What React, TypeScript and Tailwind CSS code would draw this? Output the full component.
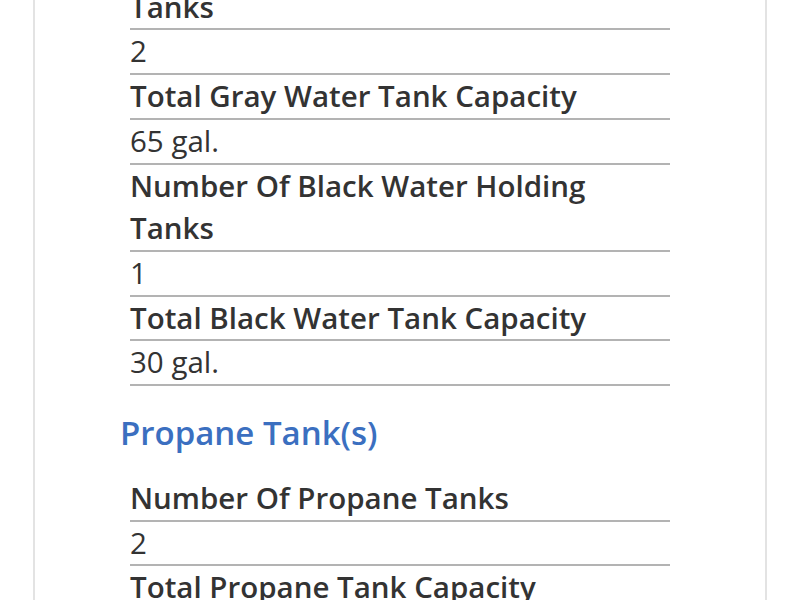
const grayWater = [
	{ label: "Number Of Gray Water Holding Tanks", value: "2" },
	{ label: "Total Gray Water Tank Capacity", value: "65 gal." },
	{ label: "Number Of Black Water Holding Tanks", value: "1" },
	{ label: "Total Black Water Tank Capacity", value: "30 gal." },
];

const propane = [
	{ label: "Number Of Propane Tanks", value: "2" },
	{ label: "Total Propane Tank Capacity", value: "40 lbs." },
];

function SpecList({ items }: { items: { label: string; value: string }[] }) {
	return (
		<dl className="ml-[10px] w-[540px]">
			{items.map((item) => (
				<div key={item.label}>
					<dt className="border-b-2 border-[#b3b3b3] pr-[16px] font-semibold leading-[42.7px]">{item.label}</dt>
					<dd className="border-b-2 border-[#b3b3b3] pr-[16px] leading-[42.7px]">{item.value}</dd>
				</div>
			))}
		</dl>
	);
}

export default function App() {
	return (
		<div
			className="h-[600px] overflow-hidden bg-white px-[33px] text-[29.5px] text-[#333333]"
			style={{ fontFamily: "'Open Sans', sans-serif" }}
		>
			<div className="flex h-full flex-col border-x-2 border-[#e3e3e3] pl-[85px]">
				<div className="-mt-[57px]">
					<SpecList items={grayWater} />
					<h2 className="mt-[27px] mb-[24px] text-[33px] font-semibold leading-[40px] text-[#3b6fc0]">Propane Tank(s)</h2>
					<SpecList items={propane} />
				</div>
			</div>
		</div>
	);
}
